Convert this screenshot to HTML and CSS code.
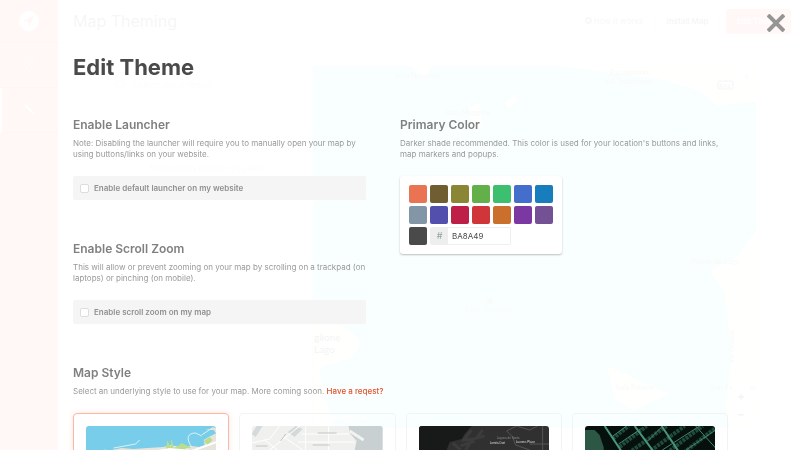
FILE: index.html
```html
<!DOCTYPE html>
<html lang="en">
<head>
  <meta charset="UTF-8" />
  <meta name="viewport" content="width=device-width, initial-scale=1.0" />
  <title>Map Theming</title>
  <link rel="stylesheet" href="styles.css">
</head>
<body>
  <div class="app">
    <nav class="sidebar">
      <a href="#" class="logo" aria-label="Home">
        <svg width="20" height="20" viewBox="0 0 20 20"><circle cx="10" cy="10" r="10" fill="#fff"/><path d="M15 5L4 10l5 1 1 5z" fill="#eb5f37"/></svg>
      </a>
      <a href="#" aria-label="Locations">
        <svg width="12" height="16" viewBox="0 0 12 16" fill="none" stroke="#f8b9a8"><path d="M6 15C3 11 1 8 1 6a5 5 0 0 1 10 0c0 2-2 5-5 9z"/><circle cx="6" cy="6" r="2"/></svg>
      </a>
      <a href="#" class="active" aria-label="Theming">
        <svg width="12" height="12" viewBox="0 0 12 12" stroke="#fff" stroke-width="2"><path d="M1 1l9 9"/></svg>
      </a>
    </nav>

    <div class="page">
      <header class="topbar">
        <h2>Map Theming</h2>
        <a href="#" class="help">
          <svg width="7" height="7" viewBox="0 0 8 8" fill="none" stroke="#777" stroke-width="2"><circle cx="4" cy="4" r="3"/></svg>
          How it works
        </a>
        <button class="btn">Install Map</button>
        <button class="btn btn-primary">Edit Theme</button>
      </header>

      <div class="preview">
        <div class="results">
          <div class="search">
            <svg width="12" height="12" viewBox="0 0 12 12" fill="none" stroke="#ccc"><circle cx="5" cy="5" r="4"/><path d="M8 8l3 3"/></svg>
            Search city or region
          </div>
          <p>No locations found in this area.</p>
        </div>
        <div class="map">
          <svg width="443" height="362" viewBox="0 0 443 362" font-family="Lato, sans-serif" font-size="7" fill="#888" text-anchor="middle">
            <g fill="#f8f0e4">
              <path d="M250 0h193v35l-38 5-18-15-40-12z"/>
              <path d="M100 0h18l-4 13-10-5zM192 38l9-10 3 6-8 8zM155 42l12-5 2 25-6 4z"/>
              <path d="M443 165v197h-26l-4-22 6-55-8-60-14-20 24-12z"/>
              <path d="M294 300l61 28-34 16-18-10z"/>
              <path d="M0 250l34 12 14 15-10 15-32 10 5 25 10 35H0z"/>
            </g>
            <path d="M88 0c-14 50 10 90-4 140S80 290 40 325" fill="none" stroke="#a5d5e0"/>
            <path d="M110 25q90 15 180-20M145 65q50-10 100-35" fill="none" stroke="#a5d5e0"/>
            <text x="105" y="12">Isola Navarosa</text>
            <text x="316" y="9" font-size="8">Passignano</text>
            <text x="316" y="18" font-size="8">sul Trasimeno</text>
            <text x="155" y="49">Isola Maggiore</text>
            <text x="402" y="198">Monte del Lago</text>
            <text x="177" y="246" fill="#98b988">Lago Trasimeno</text>
            <circle cx="177" cy="235" r="3" fill="#88a96c"/>
            <text x="322" y="324">Isola Polvese</text>
            <text x="409" y="324" font-size="8">San Fe</text>
            <text x="439" y="324" font-size="8">no</text>
            <text transform="translate(421 281) rotate(-88)">Via Ghandi</text>
            <g fill="#111" font-size="10" text-anchor="start"><text x="1" y="275">glione</text><text x="1" y="287">Lago</text></g>
            <rect x="405" y="15" width="15" height="8" rx="2" fill="#fff" stroke="#444"/>
            <text x="412" y="22" font-size="6" fill="#333">RA6</text>
            <circle cx="433" cy="11" r="6" fill="#fff"/>
            <path d="M436 8l-6 3 3 1 1 3z" fill="#ccc"/>
            <circle cx="10" cy="351" r="4" fill="none" stroke="#fff" stroke-width="2"/>
            <text x="18" y="354" font-size="10" font-weight="bold" fill="#fff" text-anchor="start">mapbox</text>
          </svg>
          <div class="zoom">
            <button aria-label="Zoom in">+</button>
            <button aria-label="Zoom out">−</button>
          </div>
        </div>
      </div>
    </div>
  </div>

  <main class="modal">
    <button class="close" aria-label="Close">
      <svg width="18" height="18" viewBox="0 0 18 18" fill="none" stroke="#959595" stroke-width="4"><path d="M1 1l16 16M17 1L1 17"/></svg>
    </button>
    <h1>Edit Theme</h1>

    <div class="columns">
      <div class="column">
        <section>
          <h3>Enable Launcher</h3>
          <p>Note: Disabling the launcher will require you to manually open your map by using buttons/links on your website.</p>
          <label class="option"><input type="checkbox"> Enable default launcher on my website</label>
        </section>
        <section>
          <h3>Enable Scroll Zoom</h3>
          <p>This will allow or prevent zooming on your map by scrolling on a trackpad (on laptops) or pinching (on mobile).</p>
          <label class="option"><input type="checkbox"> Enable scroll zoom on my map</label>
        </section>
      </div>

      <section>
        <h3>Primary Color</h3>
        <p>Darker shade recommended. This color is used for your location's buttons and links, map markers and popups.</p>
        <div class="picker">
          <button class="coral" aria-label="Coral"></button>
          <button class="brown" aria-label="Brown"></button>
          <button class="olive" aria-label="Olive"></button>
          <button class="green" aria-label="Green"></button>
          <button class="mint" aria-label="Mint"></button>
          <button class="blue" aria-label="Blue"></button>
          <button class="ocean" aria-label="Ocean"></button>
          <button class="slate" aria-label="Slate"></button>
          <button class="indigo" aria-label="Indigo"></button>
          <button class="crimson" aria-label="Crimson"></button>
          <button class="red" aria-label="Red"></button>
          <button class="orange" aria-label="Orange"></button>
          <button class="purple" aria-label="Purple"></button>
          <button class="violet" aria-label="Violet"></button>
          <button class="charcoal" aria-label="Charcoal"></button>
          <div class="hex">
            <label for="hex">#</label>
            <input type="text" id="hex" value="BA8A49">
          </div>
        </div>
      </section>
    </div>

    <section>
      <h3>Map Style</h3>
      <p>Select an underlying style to use for your map. More coming soon. <a href="#">Have a reqest?</a></p>
      <div class="styles">
        <button class="card selected" aria-label="Streets">
          <svg viewBox="0 0 131 90" preserveAspectRatio="xMidYMin slice">
            <path fill="#78cdea" d="M0 0h131v90H0z"/>
            <path fill="#e6e4dc" d="M26 24l10-2 12 1 14-1 16-1 6-2 12 2 10-1 8 1 5-2-1-5 5-3 8-4V90H20z"/>
            <path d="M80 22l2-7 3 6 1-7 2 8 4-2 8 2v3H80zM90 22l6-5 10 5zM118 15l6-4 3 3-5 5z" fill="#b9dd8c"/>
            <path d="M106 21c-6-9-4-14 4-14l6 3M28 22l22-4 4-4M2 27l18-3M116 9l12-8" fill="none" stroke="#dff0ee"/>
            <path d="M82 15v9M86 14v9" stroke="#b9dd8c"/>
            <path d="M66 26l18-3 22 2 25-9" fill="none" stroke="#fff" stroke-width="2"/>
            <path d="M120 4h8l3 4V1z" fill="#e6e4dc"/>
          </svg>
        </button>
        <button class="card" aria-label="Light">
          <svg viewBox="0 0 131 90" preserveAspectRatio="xMidYMin slice">
            <path fill="#f0f0ef" d="M0 0h131v90H0z"/>
            <path fill="#c8d0d2" d="M97 0h34v90h-25l-3-66 2-9-7-8z"/>
            <path d="M44 0l7 3-8 8-7-5zM0 8l5-8h6L4 11z" fill="#d4dada"/>
            <path d="M98 5l14 9" stroke="#f2f2f1" stroke-width="3"/>
            <path d="M0 17l18-4L28 0M13 14l15 12M18 24L48 0M50 8h48M46 16h56M54 0v30M77 0v30M31 10l20 14" fill="none" stroke="#fff"/>
            <path d="M66 7h19M61 19h17M4 20h12M29 15l5-7" stroke="#c4c4c4"/>
          </svg>
        </button>
        <button class="card" aria-label="Dark">
          <svg viewBox="0 0 131 90" preserveAspectRatio="xMidYMin slice">
            <path fill="#303030" d="M0 0h131v90H0z"/>
            <path fill="#181a19" d="M0 0h53l-7 8-3 5-12 3-3 8-7 66H0z"/>
            <path d="M53 4l-8 10 9-1-7 11M64 4l-6 8 8-2M42 20l14-5M34 17l8 7" fill="none" stroke="#3b3b3b" stroke-width="3"/>
            <path d="M98 0L88 5l6 6 3 8 14 5M98 0l13 4 8-4M124 0v24M111 18h20" fill="none" stroke="#545454"/>
            <g font-family="Liberation Sans, sans-serif" font-size="3" fill="#ddd"><text x="71" y="18">Lomita Dort</text><text x="97" y="17">Laurens Place</text><text x="78" y="13" fill="#888">Laguna de Santa</text></g>
          </svg>
        </button>
        <button class="card" aria-label="Night">
          <svg viewBox="0 0 131 90" preserveAspectRatio="xMidYMin slice">
            <path fill="#06100d" d="M0 0h131v90H0z"/>
            <path fill="#2c5744" d="M0 4h10l5 5 4 12 5 69H0z"/>
            <path d="M28 13L44 0M35 21L62 0M44 27L82 0M63 27l37-27M82 27L118 0M96 29l35-27" stroke="#204b3b" stroke-width="4" stroke-dasharray="3 1"/>
            <path d="M20 0l18 27M50 0l20 27M77 0l18 27" fill="none" stroke="#4a9678" stroke-width="2"/>
            <path d="M27 11L42 0M34 18L56 3M63 15L78 0M73 27l42-27M97 27l34-23M111 0l20 22" fill="none" stroke="#42876c"/>
          </svg>
        </button>
      </div>
    </section>
  </main>
</body>
</html>
```
FILE: styles.css
```css
* {
  box-sizing: border-box;
}
body {
  margin: 0;
  height: 100vh;
  overflow: hidden;
  font-family: Inter, sans-serif;
  font-size: 8px;
  color: #4a4a4a;
  background: #fff;
}
h1, h2, h3, p {
  margin: 0;
}
a {
  text-decoration: none;
}
button {
  font-family: inherit;
  border: none;
  padding: 0;
  cursor: pointer;
}

/* page behind the modal */
.app {
  display: flex;
  height: 100vh;
}
.sidebar {
  width: 58px;
  background: #ee7350;
}
.sidebar a {
  display: flex;
  height: 45px;
  align-items: center;
  justify-content: center;
  border-bottom: 1px solid #e05a34;
}
.sidebar .logo {
  height: 43px;
}
.sidebar .active {
  border-left: 2px solid #fff;
}
.page {
  flex: 1;
  background: #fafafa;
}
.topbar {
  display: flex;
  align-items: center;
  height: 43px;
  padding: 0 9px 0 15px;
  background: #fff;
  border-bottom: 1px solid #ddd;
}
.topbar h2 {
  flex: 1;
  font-size: 16px;
  font-weight: 400;
  color: #444;
}
.help {
  margin-right: 12px;
  color: #555;
}
.btn {
  width: 65px;
  height: 25px;
  margin-right: 6px;
  font-size: 8px;
  font-weight: 600;
  background: #fff;
  border: 1px solid #ddd;
  border-radius: 2px;
  color: #444;
}
.btn-primary {
  margin-right: 0;
  background: #ee7350;
  border-color: #ee7350;
  color: #fff;
}
.preview {
  display: flex;
  margin: 23px 44px 0;
  height: 362px;
  background: #fff;
  border-radius: 4px;
  overflow: hidden;
}
.results {
  flex: 1;
  border: 1px solid #ddd;
  color: #bbb;
  text-align: center;
}
.search {
  display: flex;
  align-items: center;
  gap: 6px;
  height: 36px;
  padding: 0 12px;
  border-bottom: 1px solid #ddd;
}
.results p {
  margin-top: 60px;
}
.map {
  position: relative;
  width: 443px;
  background: #8ff2f6;
}
.zoom {
  position: absolute;
  right: 6px;
  bottom: 6px;
  width: 18px;
  background: #fff;
  border-radius: 2px;
}
.zoom button {
  display: block;
  width: 100%;
  height: 18px;
  background: none;
  font-size: 12px;
  font-weight: bold;
  color: #333;
}

/* modal */
.modal {
  position: fixed;
  inset: 0;
  padding: 52px 72px 0 73px;
  overflow: hidden;
  background: rgba(255, 255, 255, 0.95);
}
.close {
  position: absolute;
  top: 14px;
  right: 15px;
  width: 18px;
  height: 18px;
  background: none;
}
.close svg {
  display: block;
}
h1 {
  margin-bottom: 34px;
  font-size: 22px;
  line-height: 30px;
  font-weight: 700;
}
.columns {
  display: grid;
  grid-template-columns: 293px 1fr;
  column-gap: 34px;
}
section {
  margin-bottom: 40px;
}
h3 {
  margin-bottom: 4px;
  font-size: 12px;
  line-height: 18px;
  font-weight: 600;
  color: #808080;
}
section p {
  margin-bottom: 16px;
  line-height: 11px;
  color: #999;
}
section p a {
  font-weight: 500;
  color: #e2532c;
}
.option {
  display: flex;
  align-items: center;
  gap: 5px;
  height: 24px;
  padding: 0 7px;
  background: #f5f5f5;
  border-radius: 2px;
  font-weight: 600;
  color: #909090;
}
.option input {
  appearance: none;
  width: 9px;
  height: 9px;
  margin: 0;
  background: #fff;
  border: 1px solid #ddd;
  border-radius: 2px;
}
.picker {
  display: grid;
  grid-template-columns: repeat(7, 18px);
  gap: 3px;
  width: 162px;
  padding: 9px;
  background: #fff;
  border-radius: 3px;
  box-shadow: 0 1px 2px rgba(0, 0, 0, 0.25);
}
.picker button {
  height: 18px;
  border-radius: 2px;
}
.coral { background: #e97353; }
.brown { background: #705e32; }
.olive { background: #8a8635; }
.green { background: #63b04b; }
.mint { background: #3cbf6e; }
.blue { background: #446ecb; }
.ocean { background: #187dbc; }
.slate { background: #8396a8; }
.indigo { background: #5350ad; }
.crimson { background: #bd1f49; }
.red { background: #d03639; }
.orange { background: #cb702c; }
.purple { background: #7c38a2; }
.violet { background: #735194; }
.charcoal { background: #4a4a4a; }
.hex {
  grid-column: 2 / 6;
  display: flex;
  height: 18px;
  border: 1px solid #eee;
  border-radius: 2px;
}
.hex label {
  width: 17px;
  background: #eee;
  font-size: 9px;
  line-height: 16px;
  text-align: center;
  color: #95a0a4;
}
.hex input {
  flex: 1;
  min-width: 0;
  padding: 0 4px;
  border: none;
  font: 8px Inter, sans-serif;
  color: #4a4a4a;
}
.styles {
  display: grid;
  grid-template-columns: repeat(4, 1fr);
  gap: 10px;
}
.card {
  height: 116px;
  padding: 12px;
  background: none;
  border: 1px solid #f1f4f4;
  border-radius: 4px;
}
.card.selected {
  background: #fff;
  border-color: #f9b9aa;
  box-shadow: 0 0 5px rgba(235, 95, 55, 0.2);
}
.card svg {
  display: block;
  width: 100%;
  height: 90px;
  border-radius: 3px;
}
```
